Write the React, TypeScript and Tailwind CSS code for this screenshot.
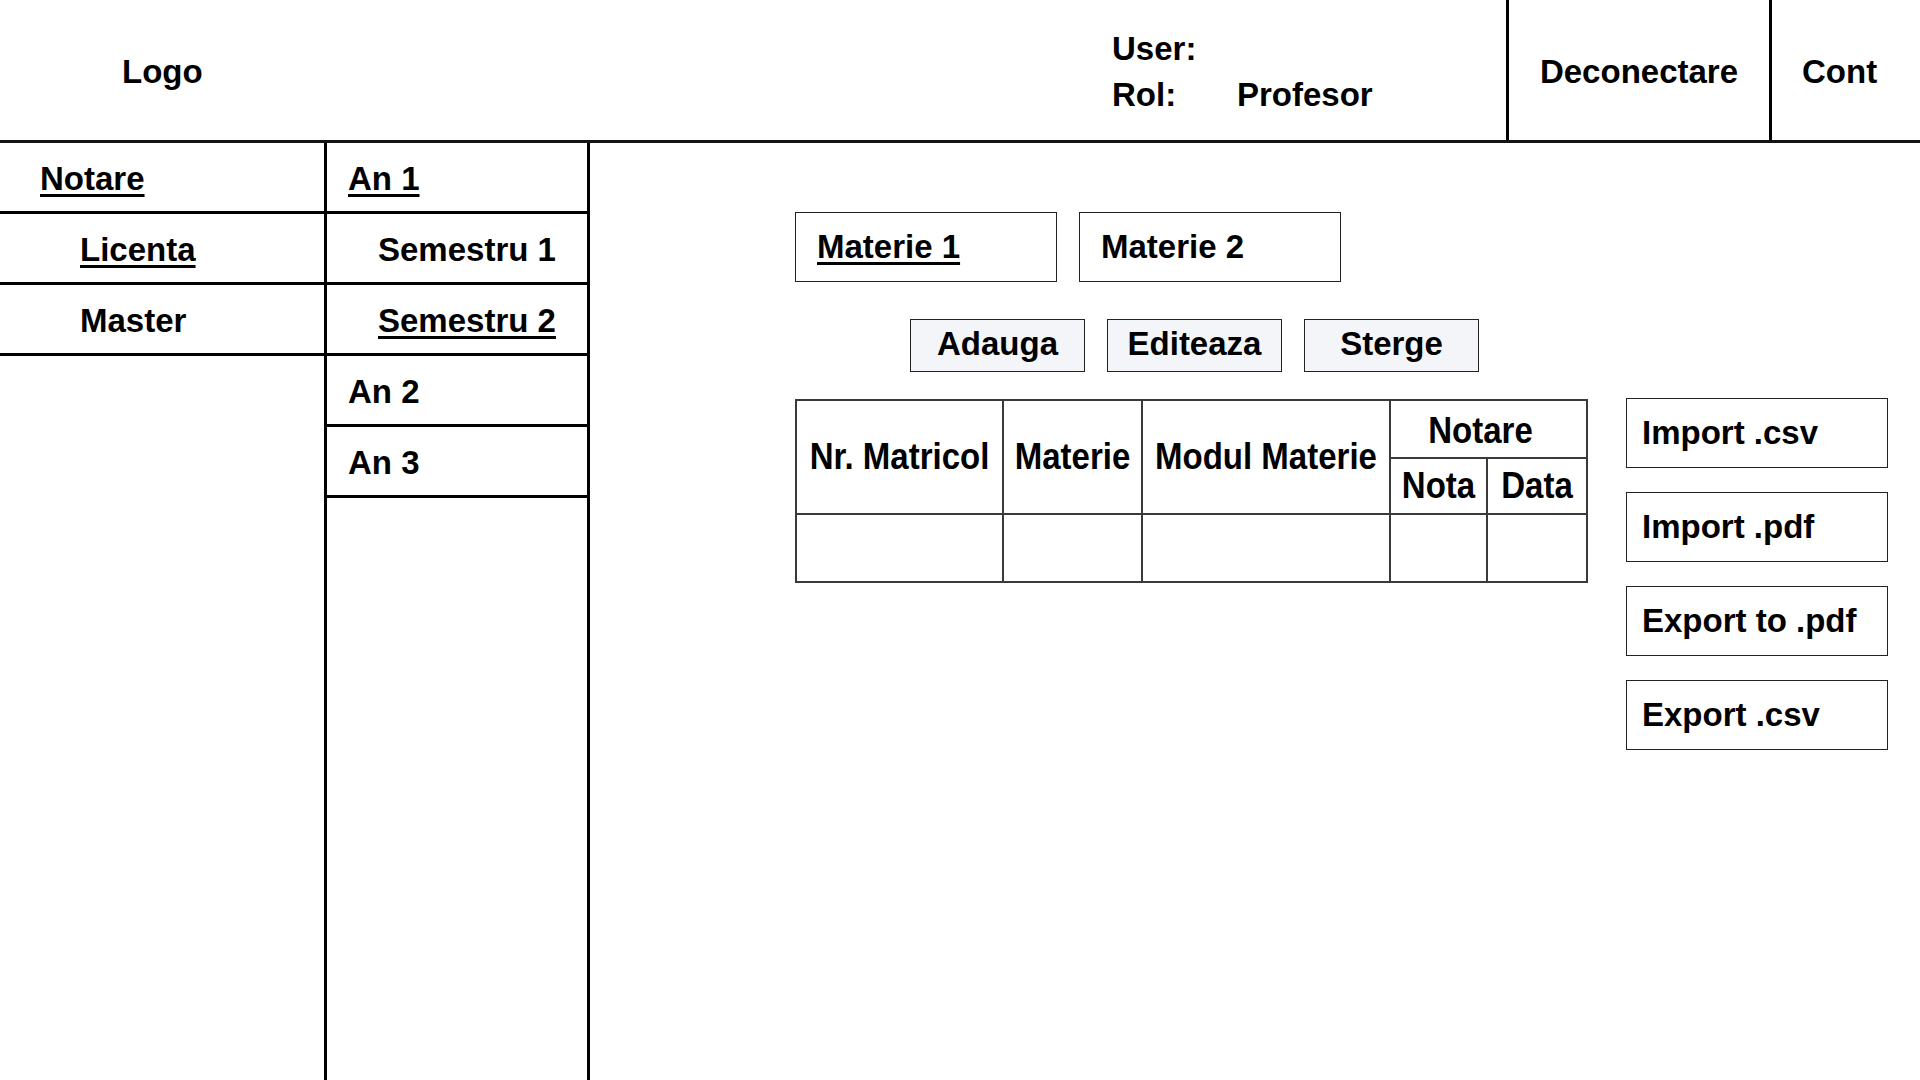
const levels = [
  { label: 'Notare', pad: 'pl-[40px]', active: true },
  { label: 'Licenta', pad: 'pl-[80px]', active: true },
  { label: 'Master', pad: 'pl-[80px]', active: false },
]

const years = [
  { label: 'An 1', pad: 'pl-[21px]', active: true },
  { label: 'Semestru 1', pad: 'pl-[51px]', active: false },
  { label: 'Semestru 2', pad: 'pl-[51px]', active: true },
  { label: 'An 2', pad: 'pl-[21px]', active: false },
  { label: 'An 3', pad: 'pl-[21px]', active: false },
]

const fileActions = ['Import .csv', 'Import .pdf', 'Export to .pdf', 'Export .csv']

const link = 'underline decoration-[3px] underline-offset-[4px]'

function SideRow({ label, pad, active }: { label: string; pad: string; active: boolean }) {
  return (
    <div className={`h-[71px] border-b-[3px] border-black flex items-center pt-[3px] ${pad}`}>
      <span className={active ? link : ''}>{label}</span>
    </div>
  )
}

// header cells of the grades table read a bit taller than the rest
function Th({ children }: { children: string }) {
  return <span className="inline-block scale-y-[1.12] whitespace-nowrap">{children}</span>
}

export default function App() {
  return (
    <div className="w-[1920px] h-[1080px] bg-white text-black font-bold text-[33px] font-['Liberation_Sans',Arial,sans-serif] flex flex-col overflow-hidden">

      {/* Header */}
      <header className="h-[143px] shrink-0 border-b-[3px] border-[#141414] flex">
        <div className="flex-1 flex items-center pl-[122px] pt-[4px]">Logo</div>
        <div className="w-[394px] flex flex-col justify-center leading-[46px] pt-[3px]">
          <div>User:</div>
          <div className="flex">
            <span className="w-[125px]">Rol:</span>
            <span>Profesor</span>
          </div>
        </div>
        <button type="button" className="w-[263px] border-l-[3px] border-black flex items-center justify-center pt-[4px]">
          Deconectare
        </button>
        <button type="button" className="w-[151px] border-l-[3px] border-black flex items-center pl-[30px] pt-[4px]">
          Cont
        </button>
      </header>

      <div className="flex-1 flex">
        {/* Level column */}
        <nav className="w-[327px] border-r-[3px] border-black">
          {levels.map((r) => <SideRow key={r.label} {...r} />)}
        </nav>

        {/* Year / semester column */}
        <nav className="w-[263px] border-r-[3px] border-black">
          {years.map((r) => <SideRow key={r.label} {...r} />)}
        </nav>

        {/* Content */}
        <main className="flex-1 pt-[69px] pl-[205px]">
          <div className="flex gap-[22px]">
            <div className="w-[262px] h-[70px] border border-[#222] flex items-center pl-[21px]">
              <span className={link}>Materie 1</span>
            </div>
            <div className="w-[262px] h-[70px] border border-[#222] flex items-center pl-[21px]">
              Materie 2
            </div>
          </div>

          <div className="flex gap-[22px] ml-[115px] mt-[37px]">
            {['Adauga', 'Editeaza', 'Sterge'].map((b) => (
              <button key={b} type="button" className="w-[175px] h-[53px] border border-[#222] bg-[#f3f5f9] flex items-center justify-center pb-[4px]">
                {b}
              </button>
            ))}
          </div>

          <div className="flex items-start gap-[38px] mt-[27px]">
            <table className="w-[791px] table-fixed border-collapse text-center text-[33px]">
              <colgroup>
                <col className="w-[207px]" />
                <col className="w-[139px]" />
                <col className="w-[248px]" />
                <col className="w-[97px]" />
                <col className="w-[100px]" />
              </colgroup>
              <thead>
                <tr className="h-[58px]">
                  <th rowSpan={2} className="border-2 border-[#3a3a3a]"><Th>Nr. Matricol</Th></th>
                  <th rowSpan={2} className="border-2 border-[#3a3a3a]"><Th>Materie</Th></th>
                  <th rowSpan={2} className="border-2 border-[#3a3a3a]"><Th>Modul Materie</Th></th>
                  <th colSpan={2} className="border-2 border-[#3a3a3a] pr-[16px] pt-[4px]"><Th>Notare</Th></th>
                </tr>
                <tr className="h-[56px]">
                  <th className="border-2 border-[#3a3a3a]"><Th>Nota</Th></th>
                  <th className="border-2 border-[#3a3a3a]"><Th>Data</Th></th>
                </tr>
              </thead>
              <tbody>
                <tr className="h-[68px]">
                  <td className="border-2 border-[#3a3a3a]"></td>
                  <td className="border-2 border-[#3a3a3a]"></td>
                  <td className="border-2 border-[#3a3a3a]"></td>
                  <td className="border-2 border-[#3a3a3a]"></td>
                  <td className="border-2 border-[#3a3a3a]"></td>
                </tr>
              </tbody>
            </table>

            <div className="flex flex-col gap-[24px] -mt-[1px]">
              {fileActions.map((a) => (
                <button key={a} type="button" className="w-[262px] h-[70px] border border-[#222] flex items-center pl-[15px]">
                  {a}
                </button>
              ))}
            </div>
          </div>
        </main>
      </div>
    </div>
  )
}
